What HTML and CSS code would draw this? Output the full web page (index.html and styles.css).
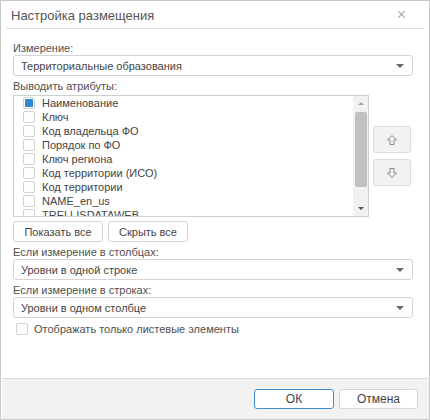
FILE: index.html
```html
<!DOCTYPE html>
<html lang="ru">
<head>
    <meta charset="UTF-8">
    <meta name="viewport" content="width=device-width, initial-scale=1.0">
    <title>Настройка размещения</title>
    <link rel="stylesheet" href="styles.css">
</head>
<body>

<div class="dialog">
    <div class="dialog-header">
        <span class="dialog-title">Настройка размещения</span>
        <span class="dialog-close">&times;</span>
    </div>

    <div class="dialog-body">
        <div class="field-label first">Измерение:</div>
        <div class="select">
            <span>Территориальные образования</span>
            <span class="caret"></span>
        </div>

        <div class="field-label">Выводить атрибуты:</div>
        <div class="attr-row">
            <div class="list">
                <div class="list-items">
                    <div class="item"><span class="check checked"></span>Наименование</div>
                    <div class="item"><span class="check"></span>Ключ</div>
                    <div class="item"><span class="check"></span>Код владельца ФО</div>
                    <div class="item"><span class="check"></span>Порядок по ФО</div>
                    <div class="item"><span class="check"></span>Ключ региона</div>
                    <div class="item"><span class="check"></span>Код территории (ИСО)</div>
                    <div class="item"><span class="check"></span>Код территории</div>
                    <div class="item"><span class="check"></span>NAME_en_us</div>
                    <div class="item"><span class="check"></span>TRELLISDATAWEB</div>
                </div>
                <div class="scrollbar">
                    <span class="sb-arrow up"></span>
                    <div class="sb-thumb"></div>
                    <span class="sb-arrow down"></span>
                </div>
            </div>
            <div class="move-buttons">
                <button class="move-btn" type="button">
                    <svg width="12" height="12" viewBox="0 0 12 12"><polygon points="6,1.5 10.5,6 8,6 8,10.5 4,10.5 4,6 1.5,6" fill="none" stroke="#8a8a8a" stroke-width="1"/></svg>
                </button>
                <button class="move-btn" type="button">
                    <svg width="12" height="12" viewBox="0 0 12 12"><polygon points="6,10.5 10.5,6 8,6 8,1.5 4,1.5 4,6 1.5,6" fill="none" stroke="#8a8a8a" stroke-width="1"/></svg>
                </button>
            </div>
        </div>

        <div class="btn-row">
            <button class="btn" type="button">Показать все</button>
            <button class="btn" type="button">Скрыть все</button>
        </div>

        <div class="field-label">Если измерение в столбцах:</div>
        <div class="select">
            <span>Уровни в одной строке</span>
            <span class="caret"></span>
        </div>

        <div class="field-label">Если измерение в строках:</div>
        <div class="select">
            <span>Уровни в одном столбце</span>
            <span class="caret"></span>
        </div>

        <div class="leaf-row"><span class="check"></span>Отображать только листевые элементы</div>
    </div>

    <div class="dialog-footer">
        <button class="btn footer-btn primary" type="button">ОК</button>
        <button class="btn footer-btn" type="button">Отмена</button>
    </div>
</div>

</body>
</html>
```

FILE: styles.css
```css
body {
    margin: 0;
    padding: 0;
    font-family: 'Liberation Sans', Arial, sans-serif;
    font-size: 11px;
    color: #444;
    background: #fff;
}
.dialog {
    width: 430px;
    height: 420px;
    box-sizing: border-box;
    border: 1px solid #c8c8c8;
    display: flex;
    flex-direction: column;
    background: #fff;
}
.dialog-header {
    height: 27px;
    margin: 0 5px;
    border-bottom: 1px solid #dcdcdc;
    display: flex;
    align-items: center;
    justify-content: space-between;
}
.dialog-title {
    padding-left: 5px;
    font-size: 13px;
    color: #555;
    padding-top: 2px;
}
.dialog-close {
    font-size: 16px;
    color: #b0b0b0;
    margin-right: 18px;
    padding-top: 1px;
}
.dialog-body {
    flex: 1;
    padding: 0 16px 0 12px;
}
.field-label {
    height: 13px;
    line-height: 13px;
    margin-top: 4px;
    color: #505050;
}
.field-label.first {
    margin-top: 13px;
}
.select {
    height: 21px;
    box-sizing: border-box;
    border: 1px solid #d4d4d4;
    border-radius: 3px;
    padding: 0 8px 0 7px;
    display: flex;
    align-items: center;
    justify-content: space-between;
    background: #fff;
}
.caret {
    width: 0;
    height: 0;
    border-left: 4px solid transparent;
    border-right: 4px solid transparent;
    border-top: 4px solid #666;
}
.attr-row {
    display: flex;
    align-items: flex-start;
    margin-top: 2px;
}
.list {
    width: 356px;
    height: 122px;
    box-sizing: border-box;
    border: 1px solid #cfcfcf;
    display: flex;
    overflow: hidden;
}
.list-items {
    flex: 1;
    overflow: hidden;
}
.item {
    height: 14px;
    line-height: 14px;
    padding-left: 9px;
    display: flex;
    align-items: center;
    white-space: nowrap;
}
.check {
    width: 12px;
    height: 12px;
    box-sizing: border-box;
    border: 1px solid #d2d2d2;
    border-radius: 2px;
    background: #fff;
    margin-right: 7px;
    flex-shrink: 0;
    position: relative;
}
.check.checked::after {
    content: "";
    position: absolute;
    left: 1px;
    top: 1px;
    width: 8px;
    height: 8px;
    background: #2a8ad6;
}
.scrollbar {
    width: 15px;
    background: #f1f1f1;
    display: flex;
    flex-direction: column;
    align-items: center;
}
.sb-arrow {
    width: 0;
    height: 0;
    border-left: 3px solid transparent;
    border-right: 3px solid transparent;
}
.sb-arrow.up {
    border-bottom: 3px solid #a3a3a3;
    margin: 6px 0 6px;
}
.sb-arrow.down {
    border-top: 3px solid #505050;
    margin: auto 0 6px;
}
.sb-thumb {
    width: 12px;
    height: 75px;
    background: #c1c1c1;
    border-radius: 2px;
    margin-top: 1px;
}
.move-buttons {
    display: flex;
    flex-direction: column;
    gap: 6px;
    margin-left: 4px;
    margin-top: 31px;
}
.move-btn {
    width: 38px;
    height: 27px;
    padding: 0;
    border: 1px solid #dcdcdc;
    border-radius: 3px;
    background: #f2f2f2;
    display: flex;
    align-items: center;
    justify-content: center;
}
.btn {
    font-family: 'Liberation Sans', Arial, sans-serif;
    font-size: 11px;
    color: #444;
    background: #fff;
    border: 1px solid #d4d4d4;
    border-radius: 3px;
    height: 21px;
    padding: 0;
    white-space: nowrap;
}
.btn-row {
    display: flex;
    gap: 5px;
    margin-top: 4px;
}
.btn-row .btn:first-child {
    width: 90px;
}
.btn-row .btn:last-child {
    width: 80px;
}
.leaf-row {
    display: flex;
    align-items: center;
    height: 14px;
    margin-top: 4px;
    padding-left: 3px;
    color: #505050;
}
.leaf-row .check {
    margin-right: 6px;
}
.dialog-footer {
    height: 41px;
    box-sizing: border-box;
    border-top: 1px solid #dadada;
    background: #f2f2f2;
    margin: 0 0 0 1px;
    display: flex;
    justify-content: flex-end;
    align-items: center;
    gap: 5px;
    padding-right: 11px;
}
.footer-btn {
    height: 20px;
    width: 79px;
    font-size: 12px;
}
.footer-btn.primary {
    width: 80px;
    border-color: #3d8fd1;
}
```
